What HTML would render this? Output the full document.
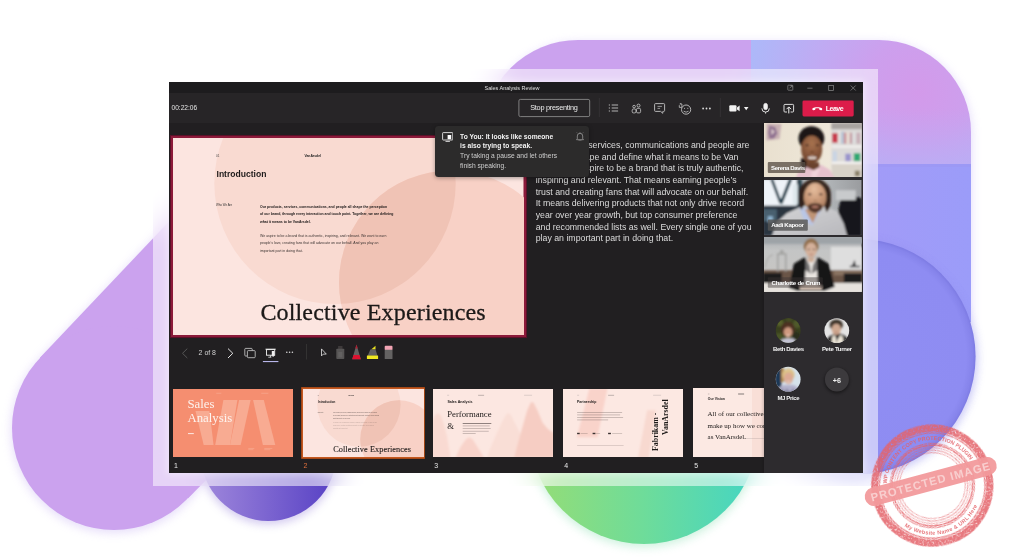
<!DOCTYPE html>
<html>
<head>
<meta charset="utf-8">
<title>Sales Analysis Review</title>
<style>
*{box-sizing:border-box;margin:0;padding:0}
html,body{width:1024px;height:559px;overflow:hidden;background:#fff;font-family:"Liberation Sans",sans-serif;}
#stage{position:absolute;left:0;top:0;width:1024px;height:559px;overflow:hidden;will-change:transform}
#bg{position:absolute;left:0;top:0}
#glass{position:absolute;left:152.8px;top:68.5px;width:725.2px;height:417px;background:rgba(255,255,255,.53);-webkit-backdrop-filter:blur(14px);backdrop-filter:blur(14px);}
#win{position:absolute;left:168.5px;top:82px;width:694px;height:390.5px;background:#211f21;overflow:hidden;color:#fff}
#glow{position:absolute;left:168.5px;top:82px;width:694px;height:390.5px;box-shadow:0 0 7px 2px rgba(255,255,255,.42)}
.abs{position:absolute}
#titlebar{position:absolute;left:0;top:0;width:694px;height:10.5px;background:#1d1c1e}
#toolbar{position:absolute;left:0;top:10.5px;width:694px;height:30px;background:#272527}
#rpanel{position:absolute;left:595.5px;top:40.5px;width:98.5px;height:350px;background:#2d2b2e;box-shadow:-1px 0 3px rgba(0,0,0,.2)}
.t{position:absolute;white-space:nowrap;line-height:1}
.sl{position:absolute;left:0;top:0;width:350.5px;height:197.2px;overflow:hidden;font-family:"Liberation Sans",sans-serif}
.nt{font-size:8.78px;color:#dcdcdc}
.th .bd{opacity:.5}.th .bd2{opacity:.35}
</style>
</head>
<body>
<div id="stage">
<svg id="bg" width="1024" height="559" viewBox="0 0 1024 559">
<defs>
<linearGradient id="gGreen" x1="0" y1="0" x2="1" y2="0"><stop offset="0" stop-color="#97dd74"/><stop offset=".5" stop-color="#6edc9a"/><stop offset="1" stop-color="#43d5c4"/></linearGradient>
<linearGradient id="gDp" x1="0" y1="0" x2="1" y2="0"><stop offset="0" stop-color="#a088dc"/><stop offset="1" stop-color="#5640c4"/></linearGradient>
<radialGradient id="gTR" gradientUnits="userSpaceOnUse" cx="918" cy="92" r="175"><stop offset="0" stop-color="#d39aea"/><stop offset=".3" stop-color="#cd9fed"/><stop offset=".62" stop-color="#bfabf3"/><stop offset="1" stop-color="#acb9f9"/></radialGradient>
<linearGradient id="gTRv" x1="0" y1="0" x2="0" y2="1"><stop offset="0" stop-color="#b4b2f7" stop-opacity="0"/><stop offset=".55" stop-color="#b4b2f7" stop-opacity="0"/><stop offset="1" stop-color="#b4b2f7" stop-opacity=".55"/></linearGradient>
<linearGradient id="gBR" x1="0" y1="0" x2="1" y2="0"><stop offset="0" stop-color="#aa9af6"/><stop offset="1" stop-color="#9b9cf9"/></linearGradient>
<radialGradient id="gCirc" cx=".5" cy=".5" r=".5"><stop offset="0" stop-color="#908ef3"/><stop offset=".92" stop-color="#8e8cf2"/><stop offset=".975" stop-color="#8684eb"/><stop offset="1" stop-color="#7d7be3"/></radialGradient>
<clipPath id="cBig"><path d="M483 135 A95 95 0 0 1 578 40 H879 A92 92 0 0 1 971 132 V322 H483 Z"/></clipPath>
<filter id="soft" x="-10%" y="-10%" width="120%" height="120%"><feGaussianBlur stdDeviation="5"/></filter>
</defs>
<g opacity=".35" filter="url(#soft)">
<path d="M39.9 358.8 L153.6 238.7 L250 137 L383.7 300.7 L188.1 499.2 Z" fill="#b9a0f0"/><circle cx="114" cy="430" r="103" fill="#b9a0f0"/>
<circle cx="268.5" cy="455" r="69" fill="#7a60d0"/>
<circle cx="644" cy="431" r="116" fill="#70d8a0"/>
<path d="M483 135 A95 95 0 0 1 578 40 H879 A92 92 0 0 1 971 132 V322 H483 Z" fill="#b8a0f4" transform="translate(1 2)"/>
<circle cx="859" cy="358.6" r="118" fill="#8a88f0"/>
</g>
<path d="M39.9 357.8 L153.6 237.7 L250 136 L383.7 300.7 L188.1 498.2 Z" fill="#cba2ee"/>
<circle cx="114" cy="428" r="102" fill="#cba2ee"/>
<circle cx="268.5" cy="453" r="68" fill="url(#gDp)"/>
<circle cx="644" cy="429" r="115" fill="url(#gGreen)"/>
<g clip-path="url(#cBig)">
<rect x="483" y="40" width="268" height="290" fill="#cba2ee"/>
<rect x="751" y="40" width="220" height="124" fill="url(#gTR)"/>
<rect x="751" y="40" width="220" height="124" fill="url(#gTRv)"/>
<rect x="751" y="164" width="220" height="170" fill="url(#gBR)"/>
<rect x="751" y="164" width="220" height="3" fill="#9a90ec" opacity=".25"/>
</g>
<circle cx="858" cy="357.5" r="118" fill="#7c78e0" opacity=".18" filter="url(#soft)"/>
<circle cx="858" cy="356.6" r="117.6" fill="url(#gCirc)"/>
</svg>
<div id="glass"></div>
<div id="glow"></div>
<div id="win">
<div id="titlebar"></div>
<div id="toolbar"></div>
<div class="t" style="left:316px;top:3.6px;width:55px;text-align:center;font-size:5.5px;color:#e0e0e0">Sales Analysis Review</div>
<svg class="abs" style="left:0;top:0" width="694" height="41" viewBox="168.5 82 694 41" fill="none" stroke="#cfcfcf" stroke-width="0.8">
 <!-- title icons -->
 <g stroke="#8c8c8c" stroke-width=".7">
 <rect x="787.3" y="85.2" width="5" height="5" rx=".6"/><path d="M789 88.3l2.6-2.6M789.9 85.6h1.8v1.8"/>
 <path d="M806.8 88.2h5.2"/>
 <rect x="828.2" y="85.6" width="4.8" height="4.8"/>
 <path d="M850.2 85.5l5 5M855.2 85.5l-5 5"/>
 </g>
 <!-- separators -->
 <path d="M598.8 98v19M719.8 98v19" stroke="#373537" stroke-width=".8"/>
 <!-- stop presenting button -->
 <rect x="518.4" y="99.4" width="70.8" height="17.2" rx="1.5" stroke="#8a8a8a" stroke-width=".9"/>
 <!-- list icon -->
 <g stroke="#b4b4b4" stroke-width="1">
 <path d="M611.2 105h6.4M611.2 108h6.4M611.2 111h6.4"/>
 <path d="M608.3 105h1.2M608.3 108h1.2M608.3 111h1.2" stroke-width="1.2"/>
 </g>
 <!-- people icon -->
 <g stroke="#c4c4c4" stroke-width=".85">
 <circle cx="638" cy="105.6" r="1.5"/><circle cx="633.6" cy="106.6" r="1.3"/>
 <rect x="636" y="108.3" width="4.1" height="4.6" rx="1.3"/>
 <rect x="631.7" y="109" width="3.7" height="3.9" rx="1.2"/>
 </g>
 <!-- chat icon -->
 <g stroke="#c4c4c4" stroke-width=".9">
 <path d="M655 103.6h8.2a.9.9 0 0 1 .9.9v6a.9.9 0 0 1-.9.9h-.9v1.9l-2.2-1.9h-5.1a.9.9 0 0 1-.9-.9v-6a.9.9 0 0 1 .9-.9z"/>
 <path d="M657 106.4h4.4M657 108.4h2.6" stroke-width=".7"/>
 </g>
 <!-- emoji icon -->
 <g stroke="#c4c4c4" stroke-width=".9">
 <circle cx="685.6" cy="109.6" r="4.6"/>
 <path d="M683.2 111.2q2.4 2 4.8 0" stroke-width=".8"/>
 <circle cx="684" cy="108.3" r=".5" fill="#d6d6d6" stroke="none"/><circle cx="687.3" cy="108.3" r=".5" fill="#d6d6d6" stroke="none"/>
 <path d="M679.2 104h2.2v3.4h-2.6v-2.2" fill="#272527" stroke-width=".8"/><path d="M680.2 104v-.9" stroke-width=".8"/>
 </g>
 <!-- more -->
 <g fill="#e0e0e0" stroke="none"><circle cx="702.6" cy="108.5" r=".9"/><circle cx="706" cy="108.5" r=".9"/><circle cx="709.4" cy="108.5" r=".9"/></g>
 <!-- camera -->
 <g fill="#f2f2f2" stroke="none">
 <rect x="728.8" y="105.2" width="7.2" height="6.2" rx="1"/><path d="M736.5 107.4l2.6-1.8v5.6l-2.6-1.8z"/>
 <path d="M743.4 106.9h4.6l-2.3 3.4z"/>
 </g>
 <!-- mic -->
 <g stroke="#f2f2f2" stroke-width=".9">
 <rect x="763.4" y="103.4" width="3.4" height="6.2" rx="1.7" fill="#f2f2f2"/>
 <path d="M761.4 108.4a3.7 3.7 0 0 0 7.4 0M765.1 112.1v1.5"/>
 </g>
 <!-- share -->
 <g stroke="#f2f2f2" stroke-width=".9">
 <path d="M786.5 112h-2.1a.9.9 0 0 1-.9-.9v-5.8a.9.9 0 0 1 .9-.9h7.8a.9.9 0 0 1 .9.9v5.8a.9.9 0 0 1-.9.9h-2.1"/>
 <path d="M788.3 113.4v-6M786 109.2l2.3-2.3 2.3 2.3" stroke-width="1"/>
 </g>
 <!-- leave -->
 <rect x="802" y="100.6" width="51.2" height="15.8" rx="1.4" fill="#dc1c4a" stroke="none"/>
 <path d="M811.9 109.6c-.3-1.2.6-2.3 4.9-2.3s5.200 1.100 4.900 2.300c-.1.600-.5.800-1 .700l-1.300-.3c-.4-.1-.6-.4-.6-.8v-.7c-.7-.3-3.300-.3-4 0v.7c0 .4-.2.700-.6.800l-1.300.3c-.5.100-.9-.1-1-.7z" fill="#fff" stroke="none"/>
</svg>
<div class="t" style="left:3px;top:23.1px;font-size:6.6px;color:#e4e4e4">00:22:06</div>
<div class="t" style="left:350px;top:22.25px;width:70.8px;text-align:center;font-size:7.3px;letter-spacing:-.245px;color:#ececec">Stop presenting</div>
<div class="t" style="left:657.3px;top:23px;font-size:7px;letter-spacing:-.5px;font-weight:700;color:#fff">Leave</div>

<!--MAIN-->
<div class="abs" style="left:1px;top:53.3px;width:357.5px;height:203px;background:#8c1a3a;box-shadow:inset 0 0 0 1px #5a1128"></div>
<div class="abs" style="left:4.5px;top:56px;width:350.5px;height:197.2px;overflow:hidden"><div class="sl">
<svg class="abs" style="left:0;top:0" width="350.5" height="197.2" viewBox="0 0 350.5 197.2">
<defs><clipPath id="cl1"><circle cx="162" cy="45.4" r="120.7"/></clipPath></defs>
<rect width="350.5" height="197.2" fill="#fce5e0"/>
<circle cx="162" cy="45.4" r="120.7" fill="#f9dad1"/>
<circle cx="278" cy="144.5" r="112" fill="#f8d1c6"/>
<circle cx="278" cy="144.5" r="112" fill="#f0c3b5" clip-path="url(#cl1)"/>
</svg>
<div class="t" style="left:43px;top:17.4px;font-size:3px;color:#444">01</div>
<div class="t" style="left:131.4px;top:17.3px;font-size:3.4px;font-weight:700;color:#222">VanArsdel</div>
<div class="t" style="left:43.500px;top:32.100px;font-size:8.57px;font-weight:700;color:#1d1a1a">Introduction</div>
<div class="t" style="left:43px;top:66px;font-size:2.9px;color:#333">Who We Are</div>
<div class="t bd" style="left:87px;top:65.6px;font-size:3.45px;font-weight:700;color:#1a1717;line-height:7.55px">Our products, services, communications, and people all shape the perception<br>of our brand, through every interaction and touch point. Together, we are defining<br>what it means to be VanArsdel.</div>
<div class="t bd2" style="left:87px;top:94.6px;font-size:3.5px;color:#3a3331;line-height:7.6px">We aspire to be a brand that is authentic, inspiring, and relevant. We want to earn<br>people’s love, creating fans that will advocate on our behalf. And you play an<br>important part in doing that.</div>
<div class="t" style="left:87.4px;top:161.700px;font-family:'Liberation Serif',serif;font-size:24px;letter-spacing:.16px;-webkit-text-stroke:.3px #1c1918;color:#1c1918">Collective Experiences</div>
</div></div>
<!--MAIN2-->
<div class="t nt" style="right:113.0px;top:59.20px">Our products, services, communications and people are</div>
<div class="t nt" style="right:124.0px;top:70.90px">strive to shape and define what it means to be Van</div>
<div class="t nt" style="right:119.0px;top:82.20px">Arsdel. We aspire to be a brand that is truly authentic,</div>
<div class="t nt" style="left:367.2px;top:93.80px">inspiring and relevant. That means earning people’s</div>
<div class="t nt" style="left:367.2px;top:105.50px">trust and creating fans that will advocate on our behalf.</div>
<div class="t nt" style="left:367.2px;top:117.20px">It means delivering products that not only drive record</div>
<div class="t nt" style="left:367.2px;top:129.00px">year over year growth, but top consumer preference</div>
<div class="t nt" style="left:367.2px;top:140.50px">and recommended lists as well. Every single one of you</div>
<div class="t nt" style="left:367.2px;top:152.20px">play an important part in doing that.</div>
<div class="abs" style="left:266.0px;top:43.5px;width:154.3px;height:51px;background:#2c2b2b;border-radius:3.5px;box-shadow:0 1px 4px rgba(0,0,0,.35)">
<svg class="abs" style="left:7.2px;top:6.6px" width="11.5" height="10" viewBox="0 0 11.5 10" fill="none" stroke="#e8e8e8" stroke-width=".9"><rect x=".6" y=".6" width="10.2" height="7.4" rx=".6"/><rect x="5.6" y="3" width="3.6" height="4.2" fill="#fff" stroke="none"/><path d="M3.5 9.4h4.4"/></svg>
<div class="t" style="left:25.6px;top:6.2px;font-size:6.68px;font-weight:700;color:#f4f4f4;line-height:9.75px">To You: It looks like someone<br>is also trying to speak.</div>
<div class="t" style="left:25.6px;top:25.85px;font-size:6.68px;color:#cfcfcf;line-height:9.3px">Try taking a pause and let others<br>finish speaking.</div>
<svg class="abs" style="left:141.2px;top:6.4px" width="8" height="9.4" viewBox="0 0 8 9.4" fill="none" stroke="#a8a8a8" stroke-width=".7"><path d="M1.3 6.9V4a2.7 2.700 0 0 1 5.400 0v2.900l.8.800H.5zM3 8.400a1 1 0 0 0 2 0M4 .3v1"/><path d="M6.600 1l.9-.7M1.400 1 .5.300" stroke-width=".5"/></svg>
</div>
<svg class="abs" style="left:0;top:258px" width="420" height="26" viewBox="168.5 340 420 26" fill="none">
<path d="M186.8 348.6l-4.800 4.700 4.800 4.700" stroke="#565656" stroke-width="1"/>
<path d="M227.500 348.600l4.800 4.700-4.800 4.700" stroke="#e8e8e8" stroke-width="1"/>
<g stroke="#cfcfcf" stroke-width=".8">
<path d="M246.600 356h-1.500a.8.800 0 0 1-.8-.8v-6a.8.800 0 0 1 .8-.8h5.800a.8.800 0 0 1 .8.800v1.300"/><rect x="246.900" y="350.600" width="7.800" height="7.100" rx=".9"/>
</g>
<g stroke="#f0f0f0" stroke-width="1">
<path d="M265 349.200h10.200"/><rect x="266" y="349.600" width="8.200" height="5.600" stroke-width=".9"/><path d="M270.100 355.400v1.700M267.800 357.200h3" stroke-width=".8"/>
<rect x="271.300" y="351" width="2.600" height="4.600" fill="#f0f0f0" stroke="none"/><path d="M271 355.200l1.600 1.900 1.600-1.900z" fill="#f0f0f0" stroke="none"/>
</g>
<rect x="262.400" y="361" width="15.500" height="1.100" fill="#b8b6ea"/>
<g fill="#d8d8d8"><circle cx="286.300" cy="352.300" r=".8"/><circle cx="289.100" cy="352.300" r=".8"/><circle cx="291.900" cy="352.300" r=".8"/></g>
<path d="M306 344v15.500" stroke="#383737" stroke-width=".8"/>
<path d="M321 348.900v7l1.800-1.800h3z" stroke="#e4e4e4" stroke-width=".8"/>
<!-- grey pen -->
<rect x="337.600" y="346" width="4.400" height="3" fill="#3e3a3b"/><rect x="335.800" y="348.800" width="8" height="10.200" rx=".8" fill="#575555"/><rect x="337.800" y="352" width="4" height="5.500" fill="#636161"/>
<!-- red pen -->
<path d="M356 344.400l4.300 14.800h-8.600z" fill="#636161"/><path d="M353 355l-1.300 4.200h8.600l-1.300-4.200z" fill="#dc1230"/><path d="M356 344.400l1.200 4h-2.400z" fill="#b01c30"/>
<!-- highlighter -->
<path d="M370.600 349.400l4.400-3.600v3.600z" fill="#e8e020"/><path d="M369.800 349.400h5.200l2 6.400h-9.800z" fill="#636161"/><rect x="366.400" y="355.600" width="11.200" height="3.500" rx=".5" fill="#f0e822"/>
<!-- eraser -->
<rect x="384.200" y="345.800" width="7.800" height="4.400" rx="1" fill="#f2a4b4"/><rect x="384.200" y="349.800" width="7.800" height="9.300" rx=".6" fill="#646262"/>
</svg>
<div class="t" style="left:30.1px;top:268.4px;font-size:6.95px;color:#d2d2d2">2 of 8</div>
<!--MAIN2E-->
<!--THUMBS-->
<div class="abs" style="left:4.2px;top:306.8px;width:120.2px;height:68.2px;background:#f58e70;overflow:hidden">
<svg class="abs" style="left:0;top:0" width="120.2" height="68.2" viewBox="172.7 388.8 120.2 68.2"><g fill="#f8ab92">
<path d="M195.200 410.800h13.900l4.200 34.100h-9.900z"/>
<path d="M223.100 399.800h14l-7.400 45.100h-14.800z"/>
<path d="M238.800 399.800h11.500l-9.900 45.100h-10.700z"/>
<path d="M252.800 399.800h10.700l11.500 45.100h-12.400z"/>
</g><rect x="187.700" y="433" width="5.800" height=".9" fill="#fff" opacity=".9"/>
<g fill="#fbc4b0" opacity=".7"><rect x="216" y="392.700" width="5" height=".5"/><rect x="261" y="392.700" width="7" height=".5"/><rect x="248" y="447.800" width="6" height=".5"/><rect x="264" y="447.800" width="8" height=".5"/><rect x="248" y="449.400" width="5" height=".5"/><rect x="264" y="449.400" width="6" height=".5"/></g>
</svg>
<div class="t" style="left:14.8px;top:9.5px;font-family:'Liberation Serif',serif;font-size:12.8px;line-height:13.9px;color:#fdf3ee">Sales<br>Analysis</div>
</div>
<div class="abs" style="left:132.4px;top:304.7px;width:124.3px;height:72.3px;background:#c4581f;box-shadow:inset 0 0 0 .6px #8a3a12"></div>
<div class="abs" style="left:134.1px;top:306.5px;width:121px;height:68.6px;overflow:hidden"><div class="th" style="position:absolute;left:0;top:0;width:350.5px;height:197.2px;transform-origin:0 0;transform:scale(0.3452,0.3479)"><div class="sl">
<svg class="abs" style="left:0;top:0" width="350.5" height="197.2" viewBox="0 0 350.5 197.2">
<defs><clipPath id="cl2"><circle cx="162" cy="45.4" r="120.7"/></clipPath></defs>
<rect width="350.5" height="197.2" fill="#fce5e0"/>
<circle cx="162" cy="45.4" r="120.7" fill="#f9dad1"/>
<circle cx="278" cy="144.5" r="112" fill="#f8d1c6"/>
<circle cx="278" cy="144.5" r="112" fill="#f0c3b5" clip-path="url(#cl2)"/>
</svg>
<div class="t" style="left:43px;top:17.4px;font-size:3px;color:#444">01</div>
<div class="t" style="left:131.4px;top:17.3px;font-size:3.4px;font-weight:700;color:#222">VanArsdel</div>
<div class="t" style="left:43.500px;top:32.100px;font-size:8.57px;font-weight:700;color:#1d1a1a">Introduction</div>
<div class="t" style="left:43px;top:66px;font-size:2.9px;color:#333">Who We Are</div>
<div class="t bd" style="left:87px;top:65.6px;font-size:3.45px;font-weight:700;color:#1a1717;line-height:7.55px">Our products, services, communications, and people all shape the perception<br>of our brand, through every interaction and touch point. Together, we are defining<br>what it means to be VanArsdel.</div>
<div class="t bd2" style="left:87px;top:94.6px;font-size:3.5px;color:#3a3331;line-height:7.6px">We aspire to be a brand that is authentic, inspiring, and relevant. We want to earn<br>people’s love, creating fans that will advocate on our behalf. And you play an<br>important part in doing that.</div>
<div class="t" style="left:87.4px;top:161.700px;font-family:'Liberation Serif',serif;font-size:24px;letter-spacing:.16px;-webkit-text-stroke:.3px #1c1918;color:#1c1918">Collective Experiences</div>
</div></div></div>
<div class="abs" style="left:264.4px;top:306.8px;width:120.2px;height:68.2px;background:#fce7e1;overflow:hidden">
<svg class="abs" style="left:0;top:0" width="120.2" height="68.2" viewBox="432.9 388.8 120.2 68.2">
<defs><filter id="b3"><feGaussianBlur stdDeviation=".8"/></filter></defs>
<g filter="url(#b3)">
<path d="M432 421l3-6 3.200-2.300 2.800 3 3 9 3 12 3.500 21h-18.500z" fill="#f9dad2"/>
<path d="M455.500 457.500l5-11 5-7 3.400-2.500 3.600 2 5 8 6.500 10.500z" fill="#f8d3ca"/>
<path d="M487 457.500l3-9 6-14 6-13 4-7 2-1.800 2.500 1.500 4 8 5 10 4 8 3 17z" fill="#f9ded6"/>
<path d="M514 457.500l4-15 5-18 4-14 3-7 1.500-1.800 2 .8 4 8 5 12 5 6 4 3 2.500 1v25z" fill="#f6cdc3"/>
</g>
<g fill="#777" opacity=".6"><rect x="447" y="394.700" width="2" height=".4"/><rect x="478" y="394.700" width="6" height=".5" fill="#333"/><rect x="524" y="394.700" width="8" height=".4"/></g>
<g fill="#3a3230"><rect x="462.600" y="422.900" width="28.600" height=".7" opacity=".8"/><rect x="462.600" y="425.500" width="27" height=".5" opacity=".5"/><rect x="462.600" y="428" width="28" height=".5" opacity=".5"/><rect x="462.600" y="430.700" width="26" height=".5" opacity=".5"/><rect x="462.600" y="433.300" width="13" height=".5" opacity=".5"/></g>
</svg>
<div class="t" style="left:14.5px;top:11.9px;font-size:3.6px;font-weight:700;color:#1c1918">Sales Analysis</div>
<div class="t" style="left:14.3px;top:20.8px;font-family:'Liberation Serif',serif;font-size:8.7px;color:#1c1918">Performance</div>
<div class="t" style="left:14.3px;top:32.8px;font-family:'Liberation Serif',serif;font-size:8.7px;color:#1c1918">&amp;</div>
</div>
<div class="abs" style="left:394.4px;top:306.8px;width:120.2px;height:68.2px;background:#fce8e2;overflow:hidden">
<svg class="abs" style="left:0;top:0" width="120.2" height="68.2" viewBox="562.9 388.8 120.2 68.2">
<defs><filter id="b4"><feGaussianBlur stdDeviation=".8"/></filter></defs>
<g filter="url(#b4)">
<path d="M589.300 388h18.100l-10 49h-20.600z" fill="#f9d3ca"/>
<path d="M647 410h8.700l-7.100 48h-10.800z" fill="#f8d9d0"/>
</g>
<g fill="#777" opacity=".6"><rect x="577" y="394.700" width="2" height=".4"/><rect x="608" y="394.700" width="6" height=".5" fill="#333"/><rect x="653" y="394.700" width="8" height=".4"/></g>
<g fill="#3a3230"><rect x="577" y="412" width="45" height=".5" opacity=".5"/><rect x="577" y="414.500" width="43" height=".5" opacity=".5"/><rect x="577" y="417" width="46" height=".5" opacity=".5"/><rect x="577" y="419.500" width="31" height=".5" opacity=".5"/>
<rect x="577" y="432.600" width="2.600" height="1.400"/><rect x="580.500" y="433.200" width="7" height=".4" opacity=".5"/><rect x="592.500" y="432.600" width="2.800" height="1.400"/><rect x="596" y="433.200" width="4" height=".4" opacity=".5"/><rect x="608" y="432.600" width="2.800" height="1.400"/><rect x="612" y="433.200" width="10" height=".4" opacity=".5"/>
<rect x="577" y="445.200" width="46.500" height=".35" opacity=".45"/></g>
</svg>
<div class="t" style="left:14.0px;top:11.9px;font-size:3.5px;font-weight:700;color:#1c1918">Partnership</div>
<div class="t" style="left:89.5px;top:61.8px;font-family:'Liberation Serif',serif;font-size:7.9px;font-weight:700;color:#1c1918;transform-origin:0 0;transform:rotate(-90deg)">Fabrikam -</div>
<div class="t" style="left:99.1px;top:46.4px;font-family:'Liberation Serif',serif;font-size:7.9px;font-weight:700;color:#1c1918;transform-origin:0 0;transform:rotate(-90deg)">VanArsdel</div>
</div>
<div class="abs" style="left:524.4px;top:306.4px;width:120.2px;height:68.2px;background:#fce9e3;overflow:hidden">
<div class="abs" style="left:59.3px;top:0;width:70px;height:68.2px;background:#f9dfd7"></div>
<svg class="abs" style="left:0;top:0" width="120.2" height="68.2" viewBox="692.9 388.8 120.2 68.2"><g fill="#333"><rect x="707.800" y="394.600" width="1.500" height=".4" opacity=".6"/><rect x="738" y="394.500" width="6" height=".6"/></g><rect x="744" y="439.500" width="20" height=".3" fill="#555" opacity=".5"/></svg>
<div class="t" style="left:14.9px;top:10.0px;font-size:3.4px;font-weight:700;color:#1c1918">Our Vision</div>
<div class="t" style="left:14.7px;top:20.5px;font-family:'Liberation Serif',serif;font-size:6.95px;line-height:11.7px;color:#1c1918">All of our collective experiences<br>make up how we come together<br>as VanArsdel.</div>
</div>
<div class="t" style="left:5.5px;top:379.8px;font-size:7px;color:#e8e8e8">1</div>
<div class="t" style="left:135.0px;top:379.8px;font-size:7px;color:#e2703c">2</div>
<div class="t" style="left:265.7px;top:379.8px;font-size:7px;color:#e8e8e8">3</div>
<div class="t" style="left:395.7px;top:379.8px;font-size:7px;color:#e8e8e8">4</div>
<div class="t" style="left:525.7px;top:379.8px;font-size:7px;color:#e8e8e8">5</div>
<!--THUMBSE-->
<div id="rpanel"></div>
<!--PANEL-->
<svg class="abs" style="left:595.7px;top:41.3px" width="97.5" height="54.1" viewBox="764.2 123.3 97.5 54.1">
<defs><filter id="p1" x="-5%" y="-5%" width="110%" height="110%"><feGaussianBlur stdDeviation=".8"/></filter>
<radialGradient id="f1" cx=".5" cy=".28" r=".75"><stop offset="0" stop-color="#a7734f"/><stop offset=".5" stop-color="#8d5b3e"/><stop offset="1" stop-color="#6d432d"/></radialGradient><linearGradient id="w1" x1="0" x2="1"><stop offset="0" stop-color="#e9e0cf"/><stop offset=".7" stop-color="#efe8da"/><stop offset="1" stop-color="#e6dfd2"/></linearGradient></defs>
<rect x="764.2" y="123.3" width="97.5" height="54.1" fill="url(#w1)"/>
<g filter="url(#p1)">
<rect x="831.500" y="123" width="31" height="47" fill="#dcdad8"/>
<rect x="831.500" y="123" width="31" height="6.500" fill="#a8a4a0"/>
<rect x="832" y="145.800" width="30" height="2.200" fill="#f2f0ee"/>
<rect x="832" y="162" width="30" height="2.400" fill="#f4f2f0"/>
<rect x="832" y="164.400" width="30" height="14" fill="#d8d2c8"/>
<rect x="832.500" y="133.500" width="5.500" height="9.500" fill="#c8394a"/><rect x="838" y="131" width="3" height="13" fill="#e8e4e0"/><rect x="841" y="132" width="3.500" height="12" fill="#b8c4d4"/><rect x="844.500" y="133" width="1.600" height="11" fill="#c8707a"/><rect x="846.500" y="132" width="4" height="12" fill="#e4d8d0"/><rect x="850.500" y="133" width="1.600" height="11" fill="#b88090"/><rect x="852.500" y="132" width="4" height="12" fill="#ddd"/><rect x="856.500" y="133" width="4" height="11" fill="#c8b0b8"/>
<rect x="833" y="151.500" width="4" height="10" fill="#c8d4e4"/><rect x="845.500" y="154" width="5.500" height="7.500" fill="#9a94cc"/><rect x="854" y="153.500" width="6.500" height="8" fill="#2fa872"/>
<rect x="855" y="171" width="5" height="5.500" fill="#8a8068"/>
<path d="M766.700 123.800l14.800.5-1.700 15-13.400 1.600z" fill="#c9b1b4"/><path d="M769.500 126l6 1.500 2 6-3 5-5 .5-1-6z" fill="#8f7090"/><path d="M771.500 128.500l3.500 3.500-3.500 3.500z" fill="#d9c6c8"/>
<path d="M796 178.500l3-8 7.500-4.500 4 2.500 6-.5 4.500-3 9 5 5 8.500z" fill="#e6c1cd"/>
<path d="M812 170l5.500-3.500 3 1.500-4 10h-5z" fill="#f0d2da"/>
<path d="M801.500 158q-1.500 7 1 13l4-3.500 1.500-7z" fill="#1d1614"/>
<path d="M806 162.500h13l.8 4.800-6 3.200-6.800-3z" fill="#6b422e"/>
<ellipse cx="811.600" cy="138.800" rx="12.900" ry="12.300" fill="#1c1614"/>
<ellipse cx="811.900" cy="149.700" rx="10.500" ry="13.900" fill="url(#f1)"/>
<path d="M800.800 143q2-8 11-8.300 9 .3 11.200 8.300 .8-4-.4-7.500-4-7-11-7t-10.800 7q-1 3.500 0 7.500z" fill="#1c1614"/>
<ellipse cx="812.400" cy="157.700" rx="4.200" ry="1.700" fill="#f1e6e0"/>
<path d="M807.200 156.200q5.200 2.400 10.400 0" fill="none" stroke="#5a3020" stroke-width=".7"/>
<ellipse cx="807.300" cy="145.600" rx="1.700" ry=".7" fill="#2e1c14"/><ellipse cx="817.600" cy="145.600" rx="1.700" ry=".7" fill="#2e1c14"/>
<ellipse cx="812.300" cy="152.300" rx="2.200" ry="1" fill="#74462e"/>
</g>
<rect x="768" y="162.400" width="37.500" height="10.800" rx="1" fill="#5a5046" opacity=".78"/>
</svg>
<div class="t" style="left:602.6px;top:82.7px;font-size:6.1px;letter-spacing:-0.393px;font-weight:700;color:#fff">Serena Davis</div>
<svg class="abs" style="left:595.7px;top:97.8px" width="97.5" height="55.1" viewBox="764.2 179.8 97.5 55.1">
<defs><filter id="p2" x="-5%" y="-5%" width="110%" height="110%"><feGaussianBlur stdDeviation=".8"/></filter>
<radialGradient id="f2" cx=".45" cy=".22" r=".8"><stop offset="0" stop-color="#e5bd9d"/><stop offset=".5" stop-color="#cb9b7b"/><stop offset="1" stop-color="#a87a5c"/></radialGradient><linearGradient id="s2" x1="0" y1="0" x2="1" y2="1"><stop offset="0" stop-color="#d4d4d6"/><stop offset="1" stop-color="#b8b8bc"/></linearGradient><linearGradient id="w2" x1="0" x2="1"><stop offset="0" stop-color="#8f979d"/><stop offset=".6" stop-color="#b4b8bb"/><stop offset="1" stop-color="#9a9c9f"/></linearGradient></defs>
<rect x="764.2" y="179.8" width="97.5" height="55.1" fill="url(#w2)"/>
<g filter="url(#p2)">
<rect x="763" y="179" width="38" height="28" fill="#eef3f8"/>
<path d="M770.500 179l9 24 2.500-1-8.500-23zM789 179l-9.500 24 3 1 10-25z" fill="#24404e"/>
<rect x="797" y="179" width="5" height="27" fill="#2e4450"/><rect x="793" y="184" width="5" height="20" fill="#dfe8ec"/>
<rect x="763" y="205.500" width="40" height="30" fill="#2a3640"/>
<rect x="763" y="209" width="14" height="12" fill="#4a6070"/>
<rect x="768" y="216" width="5" height="6" fill="#8fb4d0"/>
<path d="M841 199q8-6 14-3l7 2v38h-24q-2-20 3-37z" fill="#17171a"/>
<path d="M836 190h20v10h-20z" fill="#c8cacc"/>
<path d="M772 236l5-14 10-9 14-6.500h25l12 5 6 12 3.500 12.500z" fill="url(#s2)"/>
<path d="M799.500 207.500l5 13 8 5 9.500-17z" fill="#b9c6e6"/>
<path d="M805 209l8 14 7-14.500z" fill="#bf9476"/>
<ellipse cx="815" cy="193.500" rx="16" ry="14.500" fill="#33241c"/>
<path d="M799.200 193q-1.500 12 2.500 16.500l4.500-8zM830.800 193q1.700 14-4 19l-3.500-9z" fill="#33241c"/>
<ellipse cx="815.300" cy="197" rx="11.200" ry="14.500" fill="url(#f2)"/>
<path d="M804.300 191q3-9.500 11-9.500 8 0 11 9.500 1-5-1-8.500-4-4.500-10-4.500t-10 4.500q-2 3.500-1 8.500z" fill="#3a2a20"/>
<path d="M807.800 205q7.500-4.500 15 0 .5 6.500-7.500 7.800-8-1.300-7.500-7.800z" fill="#54392b"/>
<ellipse cx="815.300" cy="206.600" rx="3.400" ry="1.300" fill="#ad7465"/>
<ellipse cx="810" cy="194.200" rx="1.800" ry=".8" fill="#3a2820"/><ellipse cx="821" cy="194.200" rx="1.800" ry=".8" fill="#3a2820"/>
<ellipse cx="815.500" cy="200.500" rx="2" ry="1" fill="#b08465"/>
</g>
<rect x="768" y="219.400" width="40" height="11.200" rx="1" fill="#565656" opacity=".82"/>
</svg>
<div class="t" style="left:602.7px;top:139.8px;font-size:6.1px;letter-spacing:-0.351px;font-weight:700;color:#fff">Aadi Kapoor</div>
<svg class="abs" style="left:595.7px;top:155.2px" width="97.5" height="54.8" viewBox="764.2 237.2 97.5 54.8">
<defs><filter id="p3" x="-5%" y="-5%" width="110%" height="110%"><feGaussianBlur stdDeviation=".8"/></filter>
<linearGradient id="w3" x1="0" y1="0" x2="0" y2="1"><stop offset="0" stop-color="#a9adb0"/><stop offset=".25" stop-color="#c4c5c5"/><stop offset="1" stop-color="#c9c6c2"/></linearGradient></defs>
<rect x="764.2" y="237.2" width="97.5" height="54.8" fill="url(#w3)"/>
<g filter="url(#p3)">
<rect x="763" y="237" width="100" height="7" fill="#9ea3a7"/>
<rect x="831" y="247" width="31" height="23" fill="#dedede"/>
<rect x="763" y="270.500" width="100" height="13.500" fill="#6b5546"/>
<rect x="834" y="270.500" width="28" height="5" fill="#8a7362"/>
<rect x="763" y="273" width="19" height="11" fill="#1d1b1b"/><rect x="844" y="273.500" width="18" height="10" fill="#1d1b1b"/>
<rect x="763" y="283.200" width="100" height="10" fill="#e6e2dd"/>
<path d="M778 272v-18h8v18M781 254v-3h2v3" fill="none" stroke="#9a9a98" stroke-width="1.200"/>
<path d="M765 268q2-12 8-13" fill="none" stroke="#a4a4a2" stroke-width="1"/>
<path d="M852 266l3-6 1 6zM850 266h10v1.500h-10z" fill="#3a3a3c"/>
<path d="M789 288l5-24 10-6h15l10 6 6 23-10 4h-28z" fill="#141417"/>
<path d="M806 258l-1 30h13l-1-30z" fill="#e9e5e1"/>
<path d="M806 258l4 8 1 8-6-4zM817 258l-4 8-1 8 6-4z" fill="#141417" opacity=".55"/>
<ellipse cx="811.300" cy="246.600" rx="7.400" ry="7.800" fill="#8e6e50"/>
<ellipse cx="811.300" cy="250.200" rx="5.600" ry="7.600" fill="#d4b09a"/>
<path d="M805 247.500q3-6 10-5 3 2 3 6 0-9.500-7-9.500-7 1-6 8.500z" fill="#94724f"/>
<path d="M808 258h6.500v3l-3.200 2-3.300-2z" fill="#cfae98"/>
<ellipse cx="809" cy="249.500" rx="1.100" ry=".6" fill="#4a3a30"/><ellipse cx="814" cy="249.500" rx="1.100" ry=".6" fill="#4a3a30"/>
<ellipse cx="811.500" cy="254.800" rx="1.700" ry=".6" fill="#b07a70"/>
<path d="M800 286q11-3 22 0v4h-22z" fill="#d8c4b6"/>
</g>
<rect x="768" y="277.400" width="55" height="10.600" rx="1" fill="#3a3434" opacity=".45"/>
</svg>
<div class="t" style="left:603.1px;top:197.7px;font-size:6.1px;letter-spacing:-0.265px;font-weight:700;color:#fff">Charlotte de Crum</div>
<svg class="abs" style="left:595.5px;top:228px" width="98" height="100" viewBox="764 310 98 100">
<defs><filter id="pa" x="-10%" y="-10%" width="120%" height="120%"><feGaussianBlur stdDeviation=".8"/></filter>
<clipPath id="ca1"><circle cx="788.200" cy="330.600" r="12.400"/></clipPath><clipPath id="ca2"><circle cx="836.800" cy="330.600" r="12.400"/></clipPath><clipPath id="ca3"><circle cx="788.200" cy="379.200" r="12.400"/></clipPath>
<filter id="sh6" x="-30%" y="-30%" width="160%" height="160%"><feGaussianBlur stdDeviation="1.600"/></filter></defs>
<g clip-path="url(#ca1)"><rect x="775" y="317" width="27" height="27" fill="#39401f"/><g filter="url(#pa)">
<circle cx="780" cy="323" r="3.500" fill="#59622c"/><circle cx="797" cy="324" r="4" fill="#505a2c"/><circle cx="796" cy="336" r="4" fill="#2a2e1a"/><circle cx="779" cy="337" r="4" fill="#4a5428"/><circle cx="789" cy="319.500" r="3" fill="#444c24"/>
<path d="M779 344q2-5.500 6.500-6h5.500q4.500 .5 6.500 6z" fill="#c2c2d2"/>
<ellipse cx="787.800" cy="329" rx="7" ry="7.300" fill="#4a2f20"/>
<ellipse cx="788" cy="332.300" rx="4.300" ry="5.300" fill="#cf9a80"/>
<path d="M783.300 331q1.500-4.500 6-4 3 .5 3.500 4 .5-7-5-7.500-5.500 .5-4.500 7.500z" fill="#513322"/>
<ellipse cx="788.100" cy="335.200" rx="1.700" ry=".6" fill="#ead8d0"/>
</g></g>
<g clip-path="url(#ca2)"><rect x="823" y="317" width="27" height="27" fill="#e4e4e4"/><g filter="url(#pa)">
<path d="M826 344q1-7 6-9l3-1.500h5l3 1.500q5 2 6 9z" fill="#1a1a1c"/>
<path d="M832 337.500l2-3 3.500 5 3-5 2.500 3 .5 6.500h-12z" fill="#ebe4d6"/>
<path d="M835.800 338l1.500 6h-1l1.500-6z" fill="#2a2a2c"/>
<ellipse cx="836.300" cy="325" rx="6.600" ry="5.600" fill="#3b3028"/>
<ellipse cx="836.300" cy="329.300" rx="4.600" ry="5.800" fill="#cfa890"/>
<path d="M831 328q1-4.500 5.500-4.500 4.500 0 5.300 4.500 .7-7.500-5.300-8-6.500 .5-5.500 8z" fill="#3b3028"/>
<ellipse cx="836.300" cy="332.400" rx="1.500" ry=".5" fill="#a87468"/>
</g></g>
<g clip-path="url(#ca3)"><rect x="775" y="366" width="27" height="27" fill="#d6e2ea"/><g filter="url(#pa)">
<rect x="775" y="366" width="6.500" height="22" fill="#1f3856"/>
<rect x="781" y="368" width="3" height="14" fill="#b08a50"/>
<path d="M777 393q1-7 7-8h9q6 1 7 8z" fill="#b4b2cc"/>
<path d="M779 390l3-2 2 3 3-2.500 3 3 3-3 3 2v4h-17z" fill="#5a5878" opacity=".45"/>
<ellipse cx="788.300" cy="375" rx="6.200" ry="6.400" fill="#d9bb85"/>
<ellipse cx="788.500" cy="378.200" rx="4.500" ry="5.800" fill="#dcaa94"/>
<path d="M783.300 377q1-5 5.500-5t5.200 5q1-8-5.200-8.500-6.500 .5-5.500 8.500z" fill="#dfc48c"/>
<ellipse cx="788.500" cy="381.500" rx="1.700" ry=".6" fill="#f0e2dc"/>
</g></g>
<circle cx="836.800" cy="380.800" r="12.600" fill="#000" opacity=".4" filter="url(#sh6)"/>
<circle cx="836.900" cy="379.600" r="12" fill="#3c3a3d"/>
</svg>
<div class="t" style="left:604.5px;top:263.6px;width:30.600px;text-align:center;font-size:6px;letter-spacing:-0.332px;font-weight:700;color:#f4f4f4">Beth Davies</div>
<div class="t" style="left:653.3px;top:263.6px;width:30.200px;text-align:center;font-size:6px;letter-spacing:-0.263px;font-weight:700;color:#f4f4f4">Pete Turner</div>
<div class="t" style="left:608.8px;top:312.6px;width:22px;text-align:center;font-size:6px;letter-spacing:-0.36px;font-weight:700;color:#f4f4f4">MJ Price</div>
<div class="t" style="left:663.3px;top:294.5px;width:10px;text-align:center;font-size:7.2px;font-weight:700;color:#f0f0f0">+6</div>
<!--PANELE-->
</div>
<!--STAMP-->
<svg class="abs" style="left:860px;top:414px" width="148" height="145" viewBox="860 414 148 145">
<defs>
<filter id="gr" x="-5%" y="-5%" width="110%" height="110%">
<feTurbulence type="fractalNoise" baseFrequency=".6" numOctaves="2" seed="7" result="n"/>
<feColorMatrix in="n" type="matrix" values="0 0 0 0 0  0 0 0 0 0  0 0 0 0 0  0 0 0 -3 2.6" result="m"/>
<feComposite in="SourceGraphic" in2="m" operator="in"/>
</filter>
<path id="arcT" d="M 888.81 471.89 A 45.6 45.6 0 0 1 977.21 477.68"/>
<path id="arcB" d="M 894.89 517.55 A 49.2 49.2 0 0 0 978.53 502.43"/>
</defs>
<g transform="rotate(-15 932.3 485.6)" opacity=".86">
<g filter="url(#gr)" fill="none" stroke="#e4646a">
<circle cx="932.3" cy="485.6" r="57.4" stroke-width="7.2"/>
<circle cx="932.3" cy="485.6" r="52.6" stroke-width="1.2"/>
<circle cx="932.3" cy="485.6" r="42.2" stroke-width="1"/>
<circle cx="932.3" cy="485.6" r="40.3" stroke-width="1.4"/>
<circle cx="932.3" cy="485.6" r="37.8" stroke-width=".9" stroke-dasharray="1.4 .6"/>
<circle cx="932.3" cy="485.6" r="35.4" stroke-width="1.3" stroke-dasharray=".7 .5"/>
<circle cx="932.3" cy="485.6" r="33" stroke-width=".7"/>
</g>
<g fill="#e4646a" font-family="'Liberation Sans',sans-serif" font-weight="700">
<text font-size="5.5" letter-spacing=".0"><textPath href="#arcT">WP CONTENT COPY PROTECTION PLUGIN</textPath></text>
<text font-size="5.5" letter-spacing=".28"><textPath href="#arcB">My Website Name &amp; URL Here</textPath></text>
</g>
</g>
<g transform="rotate(-15 932.3 485.6)">
<rect x="863.8" y="472.0" width="136" height="18.4" rx="9.2" fill="#f2999b" opacity=".94"/>
<text x="931.8" y="485.3" text-anchor="middle" font-family="'Liberation Sans',sans-serif" font-weight="700" font-size="11.2" letter-spacing="1" fill="#f9d2d2" opacity=".95">PROTECTED IMAGE</text>
</g>
</svg>
<!--STAMPE-->
</div>
</body>
</html>
